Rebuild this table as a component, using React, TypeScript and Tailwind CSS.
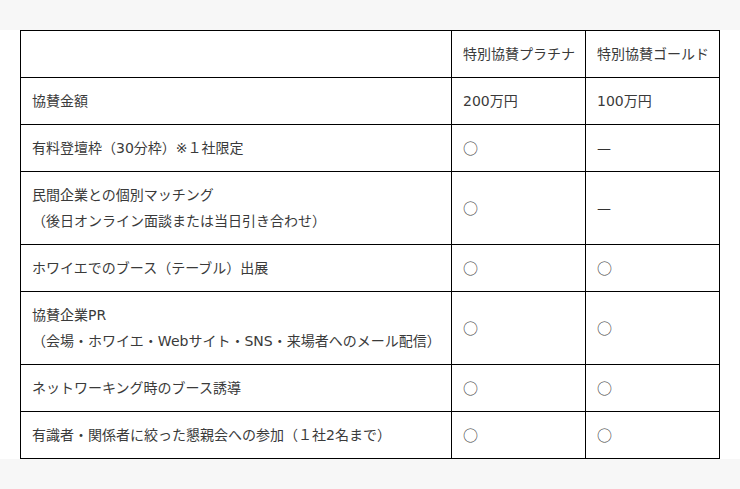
import React from 'react';

type Row = { label: string[]; platinum: string; gold: string };

const rows: Row[] = [
  { label: ['協賛金額'], platinum: '200万円', gold: '100万円' },
  { label: ['有料登壇枠（30分枠）※１社限定'], platinum: '○', gold: '—' },
  { label: ['民間企業との個別マッチング', '（後日オンライン面談または当日引き合わせ）'], platinum: '○', gold: '—' },
  { label: ['ホワイエでのブース（テーブル）出展'], platinum: '○', gold: '○' },
  { label: ['協賛企業PR', '（会場・ホワイエ・Webサイト・SNS・来場者へのメール配信）'], platinum: '○', gold: '○' },
  { label: ['ネットワーキング時のブース誘導'], platinum: '○', gold: '○' },
  { label: ['有識者・関係者に絞った懇親会への参加（１社2名まで）'], platinum: '○', gold: '○' },
];

const cell = 'border border-black pl-[11px] pr-[6px] py-[10px] align-middle text-left font-normal whitespace-nowrap';
const line = 'h-[26px] overflow-visible';

const Mark = ({ v }: { v: string }) =>
  v === '○' ? (
    <span className="text-[15px] text-[#444]" style={{ fontFamily: '"Noto Sans CJK JP", sans-serif' }}>
      {v}
    </span>
  ) : v === '—' ? (
    <span className="text-[#333]">{v}</span>
  ) : (
    <>{v}</>
  );

export default function App() {
  return (
    <div
      className="min-h-screen bg-[#f7f7f7] pt-[30px] text-[14px] leading-[26px] text-[#3a3a3a]"
      style={{ fontFamily: '"DejaVu Sans", "Noto Sans CJK JP", sans-serif' }}
    >
      <div className="bg-white px-5">
        <table className="w-[699px] border-collapse table-fixed">
          <colgroup>
            <col className="w-[431px]" />
            <col className="w-[134px]" />
            <col className="w-[134px]" />
          </colgroup>
          <thead>
            <tr>
              <th className={cell}>
                <div className={line}>&nbsp;</div>
              </th>
              <th className={cell}>
                <div className={line}>特別協賛プラチナ</div>
              </th>
              <th className={cell}>
                <div className={line}>特別協賛ゴールド</div>
              </th>
            </tr>
          </thead>
          <tbody>
            {rows.map((r, i) => (
              <tr key={i}>
                <td className={cell}>
                  {r.label.map((l, j) => (
                    <div key={j} className={line}>
                      {l}
                    </div>
                  ))}
                </td>
                <td className={cell}>
                  <div className={line}>
                    <Mark v={r.platinum} />
                  </div>
                </td>
                <td className={cell}>
                  <div className={line}>
                    <Mark v={r.gold} />
                  </div>
                </td>
              </tr>
            ))}
          </tbody>
        </table>
      </div>
    </div>
  );
}
